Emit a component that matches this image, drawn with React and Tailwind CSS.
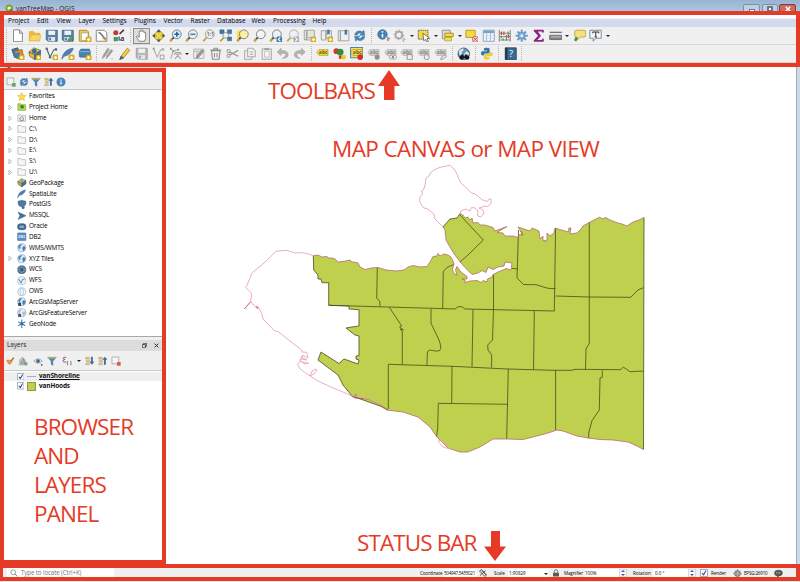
import React from "react";

const Svg = ({ children, className = "size-[14px]" }) => (
  <svg viewBox="0 0 16 16" className={className + " shrink-0"} fill="none" strokeLinejoin="round">
    {children}
  </svg>
);

const Plus = ({ x = 9.5, y = 9.5 }) => (
  <g>
    <rect x={x} y={y} width="6" height="6" rx="1" fill="#e8c02c" stroke="#b18b12" strokeWidth=".7" />
    <path d={`M${x + 3} ${y + 1.3}v3.4M${x + 1.3} ${y + 3}h3.4`} stroke="#fffbe0" strokeWidth="1.4" />
  </g>
);

const Lens = ({ tint = "#eef1f2", handle = "#4a4a3a", ring = "#777e80", children }) => (
  <g>
    <path d="M6 9.5 1.5 14.5" stroke={handle} strokeWidth="2.2" />
    <path d="M4 11.8 1.5 14.5" stroke="#d8a92c" strokeWidth="2" />
    <circle cx="9.3" cy="6.3" r="5.2" fill={tint} stroke={ring} strokeWidth="1.1" />
    {children}
  </g>
);

const Floppy = ({ c = "#5584ad", d = "#3c6489" }) => (
  <g>
    <path d="M1.5 1.5h13v13h-11l-2-2z" fill={c} stroke={d} />
    <rect x="4" y="2" width="8" height="5" fill="#edf1f4" />
    <rect x="4" y="9.5" width="8" height="5" fill="#dfe5ea" />
    <path d="M6 10.5v3" stroke={d} strokeWidth="1.8" />
  </g>
);

const Tag = ({ c = "#d2d2d2", t = "#858585", children }) => (
  <g>
    <path d="M.8 6.5 3.5 3h10.8v7H3.5z" fill={c} stroke={t} strokeWidth=".4" />
    <text x="3.4" y="8.7" fontSize="6" fontWeight="700" fill={t} fontFamily="Open Sans, sans-serif">abc</text>
    {children}
  </g>
);

const Globe = ({ bg = "#e1ebf3", land = "#4b7fae", ring = "#6b94b9" }) => (
  <g>
    <circle cx="8" cy="8" r="6.8" fill={bg} stroke={ring} />
    <path d="M2 6c1-3 4-4.500 6-4l-1 3-2 1 1 2-2 3zM8.500 8l3-3 2.800 2-1 4-3 3-.8-3z" fill={land} />
  </g>
);

const icons = {
  file: <path d="M3 1h7l3.500 3.500V15H3zM10 1v4h3.500" fill="#fff" stroke="#777" />,
  folder: <g><path d="M1.500 3h5l1.500 2h6v9h-12.500z" fill="#e8bd3b" stroke="#d3a52b" strokeWidth=".6" /><path d="M1.500 14 4 7h11.500L13.500 14z" fill="#f8d766" stroke="#ddb03a" strokeWidth=".6" /></g>,
  save: <Floppy />,
  saveAs: <g><Floppy /><path d="M8 14.500l1-3 4-3.500 2.200 2-4 4z" fill="#58a55c" stroke="#2f7340" strokeWidth=".7" /></g>,
  layoutNew: <g><path d="M1.500 1.500h9l2 2v11h-11z" fill="#f2ce4b" stroke="#a3831f" /><path d="M4 4.500h8v9H4z" fill="#fff" stroke="#8d8d74" strokeWidth=".7" /><Plus /></g>,
  layoutMgr: <g><path d="M1.500 1.500h9.500l3 3v10H1.500z" fill="#fff" stroke="#777" /><path d="M4 4.500c2 0 3 0 3.500 2L13 12.500" stroke="#6a7580" strokeWidth="1.800" /><path d="M9 10 13 13.500" stroke="#dba42d" strokeWidth="1.800" /></g>,
  style: <g><circle cx="4.500" cy="4.500" r="3" fill="#c43930" /><path d="m9 6 5-5" stroke="#333" strokeWidth="1.800" /><rect x="2" y="9.500" width="5" height="5" fill="#4f9455" /><path d="M8.500 9v4h2" stroke="#3e7aac" strokeWidth="1.800" /><text x="10" y="14.500" fontSize="7.500" fill="#333" fontWeight="700" fontFamily="Open Sans, sans-serif">a</text></g>,
  hand: <path d="M5 14.500 1.800 9.500c-.6-1.300.8-1.900 1.600-.9L5 10V3c0-1.200 1.700-1.200 1.800 0V1.900c.1-1.300 1.900-1.300 2 0V3c.2-1.100 1.900-1 1.900.2V4.500c.3-1 1.900-1 1.900.3V11l-1.300 3.500z" fill="#fff" stroke="#555" strokeWidth=".8" />,
  pan: <g><path d="m8 .5 2.500 3.200H5.500zM8 15.500l2.500-3.200H5.500zM.5 8l3.200-2.500v5zM15.500 8l-3.200-2.500v5z" fill="#43617e" stroke="#2f4a66" strokeWidth=".6" /><path d="M4.500 4 6.500 3.500 8 5.500l1.500-2 2.500.5.500 2.500-2 1.500 2 1.500-.5 2.500-2.500.5-1.500-2-1.500 2-2.500-.5-.5-2.500 2-1.500-2-1.500z" fill="#f6d52c" stroke="#b49516" strokeWidth=".6" /></g>,
  zin: <Lens tint="#e5eff7" ring="#5480a8"><path d="M9.300 3.300v6M6.300 6.300h6" stroke="#2c6394" strokeWidth="1.900" /></Lens>,
  zout: <Lens><path d="M6.300 6.300h6" stroke="#4a80af" strokeWidth="1.900" /></Lens>,
  zone: <Lens handle="#aaa" ring="#999"><text x="5.700" y="8.700" fontSize="6" fontWeight="700" fill="#777" fontFamily="Open Sans, sans-serif">1:1</text></Lens>,
  zfull: <g><path d="M1 1h5v4.500H1zM10 1h5v4.500h-5zM10 9.500h5V14h-5z" fill="#4178a8" stroke="#2d5c86" strokeWidth=".5" /><circle cx="8" cy="7.500" r="3.400" fill="#eef2f5" stroke="#7a8790" /><path d="M5.500 10.500 1.500 14.500" stroke="#c19633" strokeWidth="2" /></g>,
  zsel: <g><path d="M1 2h8v9H1z" fill="#f6e04b" /><Lens tint="#faf0a0" /></g>,
  zlayer: <Lens tint="#f4f4f2" />,
  zlast: <g><Lens /><rect x="9" y="9" width="6.500" height="6.500" rx="1" fill="#3f7cb3" /><path d="m13.500 10-2.500 2.300 2.500 2.200" stroke="#fff" strokeWidth="1.300" /></g>,
  znext: <g><Lens handle="#aaa" ring="#aaa" /><rect x="9" y="9" width="6.500" height="6.500" rx="1" fill="#aaa" /><path d="m11 10 2.500 2.300-2.500 2.200" stroke="#fff" strokeWidth="1.300" /></g>,
  mapview: <g><path d="M1.500 1.500h3v11h-3zM4.500 1.500h9v9h-9z" fill="#e5e5df" stroke="#999" /><path d="M2 13h7" stroke="#999" /><Plus /></g>,
  bmNew: <g><path d="M1.500 2h5.500v11H1.500zM7 2h6.500v9H7z" fill="#eee" stroke="#999" /><path d="M8.500 1h3v6l-1.500-1.500L8.500 7z" fill="#3f79ad" /><Plus /></g>,
  bm: <g><path d="M1.500 2h2.500v12H1.500zM4 2h10v12H4z" fill="#f0f0f0" stroke="#999" /><path d="M9 1h3v6.500L10.500 6 9 7.500z" fill="#3f79ad" /></g>,
  refresh: <g><path d="M2 7C2.500 3.500 6 1.800 9 2.500l2 1 1.800-2 1.200 6H8l2-2C8 4 5.500 5 5 7z" fill="#4787bd" stroke="#2d669a" strokeWidth=".6" /><path d="M14 9c-.5 3.500-4 5.200-7 4.500l-2-1-1.800 2L2 8.500h6l-2 2c2 1.500 4.500.5 5-1.500z" fill="#4787bd" stroke="#2d669a" strokeWidth=".6" /></g>,
  identify: <g><circle cx="6.500" cy="6.500" r="5.500" fill="#4382b8" stroke="#2e6799" /><path d="M6.500 2.500v2M6.500 6v4" stroke="#fff" strokeWidth="1.800" /><path d="m8.500 7.500 6.500 4-3 .5 1.500 2.500" fill="#fff" stroke="#555" /></g>,
  action: <g><circle cx="7" cy="7" r="4" stroke="#a2a2a2" strokeWidth="2" /><circle cx="7" cy="7" r="5.600" stroke="#b5b5b5" strokeWidth="1.400" strokeDasharray="2 2.200" /><path d="m9 8.500 5.500 4-3 .5 1.500 2.500" fill="#fff" stroke="#999" /></g>,
  select: <g><rect x="1.500" y="1.500" width="11.500" height="10.500" fill="#f8db38" stroke="#4d6170" strokeDasharray="2 .6" /><path d="m7 5 8 6-3.200.6L13.500 15l-1.800.7-1.500-3.200L8 14z" fill="#fff" stroke="#555" strokeWidth=".9" /></g>,
  selval: <g><path d="M1.500 1.500h9.500v10H1.500z" fill="#ddd" stroke="#888" /><path d="M4.500 5h10v4h-10z" fill="#f8df42" stroke="#9a8622" /><path d="M4.500 10h8v4h-8z" fill="#f8df42" stroke="#a08d30" strokeWidth=".7" /></g>,
  desel: <g><rect x="1" y="1.500" width="11" height="8.500" fill="#f9d93b" stroke="#ab9025" /><rect x="9" y="9" width="6.500" height="6.500" rx="2" fill="#f6d9d5" stroke="#c55249" /><path d="m10.500 10.500 3.500 3.500m0-3.500-3.500 3.500" stroke="#c03930" /></g>,
  table: <g><path d="M1.500 1.500h13v13h-13z" fill="#fff" stroke="#6795bd" /><path d="M2 2h12v3H2z" fill="#76a4cb" /><path d="M5.500 5v9M10 2v12" stroke="#89aac7" /><path d="M2 8h12M2 11h12" stroke="#bfd2e2" /></g>,
  calc: <g><path d="M1.500 1v14M14.500 1v14M1.500 5h13M1.500 9h13M1.500 13h13" stroke="#777" /><path d="M4 3v4M7 3v4M10 7v4M12.500 7v4" stroke="#c84b45" strokeWidth="1.500" /><path d="M4 8v3M12 3v4M6 11v3M10 11v3" stroke="#43a062" strokeWidth="1.500" /></g>,
  gear: <g><path d="M8 .8v14.400M.8 8h14.400M3 3l10 10M13 3 3 13" stroke="#6b9dcb" strokeWidth="2.500" /><circle cx="8" cy="8" r="4" fill="#8ab3d8" stroke="#5d8db9" /><circle cx="8" cy="8" r="1.500" fill="#edf4fa" /></g>,
  sigma: <path d="M13 4V2H3l5.500 6L3 14h10v-2.500M5 2.500 9.500 8 5 13" stroke="#8a2385" strokeWidth="2" />,
  measure: <g><path d="M.8 4h14.400" stroke="#777" strokeWidth="1.600" /><rect x=".8" y="7.500" width="14.400" height="5" fill="#858585" stroke="#666" /><path d="M2 9.300h12" stroke="#d5d5d5" /></g>,
  tip: <g><path d="M4 1.500h9q2 0 2 2v4q0 2-2 2H9l-4 3.500V9.500H4q-2 0-2-2v-4q0-2 2-2z" fill="#f5e27c" stroke="#b99e35" /><path d="M4.500 10 2.500 14" stroke="#488c52" strokeWidth="3" /></g>,
  textA: <g><path d="M1 1.500h13.500V11H8l-3 3.500V11H1z" fill="#f2f5f8" stroke="#6d7d8a" /><path d="M4.500 5V3.500h7V5M8 3.500v6M6.500 9.500h3" stroke="#333" strokeWidth="1.200" /></g>,
  ds: <g><path d="M1 3 8 1l3 9-7 2z" fill="#3d79aa" stroke="#28557c" /><path d="m4 5 9-2 2 9-8 2z" fill="#e08d36" stroke="#9c6129" /><path d="m3 8 7-2 1 7H4z" fill="#427dae" /><Plus /></g>,
  gpkg: <g><path d="m1 6 6-5 8 3-7 5z" fill="#f5c840" stroke="#3a4650" strokeWidth=".7" /><path d="m1 6 7 3v6L2 11z" fill="#dba827" stroke="#3a4650" strokeWidth=".7" /><path d="m8 9 7-5v6l-7 5z" fill="#3e719b" stroke="#2c4f6e" strokeWidth=".7" /><circle cx="8" cy="5" r="2.500" fill="#69a3cc" /></g>,
  gpkgNew: <g><path d="m1 6 6-5 8 3-7 5z" fill="#f5c840" stroke="#3a4650" strokeWidth=".7" /><path d="m1 6 7 3v6L2 11z" fill="#f0bb30" stroke="#3a4650" strokeWidth=".7" /><path d="m8 9 7-5v6l-7 5z" fill="#3e719b" stroke="#2c4f6e" strokeWidth=".7" /><circle cx="7.500" cy="5" r="2.800" fill="#376e9a" /><Plus /></g>,
  shp: <g><path d="m2 2 4 10L10 4q1.500-2 4-1.500" stroke="#4d5d66" strokeWidth="1.300" /><circle cx="2" cy="2" r="1.500" fill="#4f6b7c" /><circle cx="6" cy="12" r="1.500" fill="#4f6b7c" /><circle cx="13" cy="3" r="1.500" fill="#4f6b7c" /><Plus /></g>,
  featherNew: <g><path d="M1 14.500C2 7 7 2 14.500 1.500 13 7 9 10 3.500 11z" fill="#4e82b0" stroke="#315f88" strokeWidth=".7" /><Plus /></g>,
  feather: <path d="M1 15C2 7 7 2 14.500 1.500 13 7 9 10 3.500 11z" fill="#4e82b0" stroke="#315f88" strokeWidth=".6" />,
  virt: <g><path d="m1.500 5 2-2.500h10l1 2.500v6l-1 1h-11l-1-1z" fill="#4782b5" stroke="#33648e" strokeWidth=".7" /><path d="M2 5.500h12" stroke="#97bddb" /><Plus /></g>,
  pencils: <path d="m1.500 14 1-4L8 1.500l2 1.300-5.500 8.500zM6 14l1-4 5-7 2 1.300-5.200 7zM12 14h2" fill="#999" stroke="#aaa" />,
  pencil: <g><path d="M3.500 11 11 1.500l3 2.300L6.500 13z" fill="#f0cb43" stroke="#a8882a" /><path d="M3.500 11 2 15l4.500-2z" fill="#666" stroke="#555" /></g>,
  saveG: <Floppy c="#b7b7b7" d="#9a9a9a" />,
  addG: <g><path d="m2 2 4 10L10 4q1.500-2 4-1.500" stroke="#aaa" strokeWidth="1.300" /><circle cx="2" cy="2" r="1.500" fill="#aaa" /><circle cx="13" cy="3" r="1.500" fill="#aaa" /><rect x="9" y="9" width="6" height="6" rx="1" fill="#b5b5b5" /><path d="M12 10.500v3M10.500 12h3" stroke="#fff" strokeWidth="1.200" /></g>,
  vertex: <g><path d="M2 2 5 5l6-2M5 5l-3 9" stroke="#aaa" strokeWidth="1.200" /><path d="m7 6 7 8m0-8-7 8M6 9q5-5 9 0" stroke="#aaa" strokeWidth="1.500" /><path d="M1 1h2v2H1zM10 2h2v2h-2zM4 4h2v2H4z" fill="#8f8f8f" /></g>,
  modify: <g><path d="M2 2.500h12v11H2z" fill="#eee" stroke="#aaa" /><path d="M2 5h12M6 5v8" stroke="#aaa" /><path d="m5 13 1-3 6-7 2 2-6 7z" fill="#999" stroke="#8b8b8b" /></g>,
  trash: <path d="M3 4.500h10l-1 10H4zM1.500 3.500h13M6 3V1.500h4V3M6.500 7v5M9.500 7v5" stroke="#8c8c8c" strokeWidth="1.300" />,
  cut: <g><path d="m14.500 4-10 5.500M14.500 11 4.500 6" stroke="#999" strokeWidth="1.500" /><circle cx="3" cy="5" r="1.900" stroke="#999" strokeWidth="1.200" /><circle cx="3" cy="10.500" r="1.900" stroke="#999" strokeWidth="1.200" /></g>,
  copy: <path d="M5.500 1.500h6l3 3v7h-9zM5 4.500H2v10h8.500V12M8 6h4M8 8.500h4" stroke="#aaa" strokeWidth="1.200" />,
  paste: <g><path d="M2.500 2.500h11v12h-11z" stroke="#aaa" strokeWidth="1.200" /><path d="M5.500 5h5.500v7H5.500z" fill="#f8f8f8" stroke="#b5b5b5" /><path d="M5 1.500h6v2H5z" fill="#999" /></g>,
  undo: <path d="M6 1.500 1.500 6 6 10V7.500q5-.5 5.500 1.500.4 2.500-4 4.500 7.500-.5 7-5Q14 4 6 4z" fill="#b2b2b2" stroke="#999" strokeWidth=".6" />,
  redo: <path d="M10 1.500 14.500 6 10 10V7.500Q5 7 4.500 9q-.4 2.500 4 4.500-7.500-.5-7-5Q2 4 10 4z" fill="#b2b2b2" stroke="#999" strokeWidth=".6" />,
  abc: <Tag c="#f5d93a" t="#6d5a15" />,
  diag: <g><circle cx="4" cy="5" r="3.400" fill="#d8372e" /><circle cx="8.500" cy="6" r="4" fill="#28923c" /><path d="M7 10h3.500v4H7z" fill="#d8372e" /><circle cx="12.500" cy="12" r="2.800" fill="#f0c62d" /></g>,
  abcHi: <g><rect x=".7" y=".7" width="14.600" height="12" fill="#f7df4c" stroke="#4984b8" strokeWidth="1.200" /><Tag c="#f8df54" t="#5d5325"><circle cx="12" cy="12" r="3.300" fill="#d22f27" /></Tag></g>,
  abc1: <Tag><circle cx="12" cy="12" r="3" fill="#8f8f8f" /></Tag>,
  abc2: <Tag><ellipse cx="10.500" cy="12" rx="4.500" ry="2.500" fill="#eee" stroke="#999" /><circle cx="10.500" cy="12" r="1.300" fill="#777" /></Tag>,
  abc3: <Tag><rect x="8.500" y="9" width="6" height="6" fill="#eee" stroke="#888" /></Tag>,
  abc4: <Tag><circle cx="11.500" cy="12" r="3" fill="#eee" stroke="#888" /></Tag>,
  abc5: <Tag><path d="m8 15 1-3 4-3 2 2-4 3z" fill="#eee" stroke="#888" /></Tag>,
  metasearch: <g><Globe bg="#6b93b8" land="#dce8f1" ring="#2e4e6b" /><circle cx="5.500" cy="12.500" r="2.700" fill="#181818" /><circle cx="12" cy="12.500" r="2.700" fill="#181818" /><path d="M5 9h2.500v2h2V9H12v4H5z" fill="#181818" /></g>,
  python: <g><path d="M4.500 4V2.500Q4.500 1 8 1t3.500 1.500V6Q11.500 7.800 9 7.800H6Q4.500 8 4.500 10H3Q1 10 1 7.500T3 5h5V4z" fill="#3a73a4" /><path d="M11.500 12v1.500Q11.500 15 8 15t-3.500-1.500V10Q4.500 8.200 7 8.200h3Q11.500 8 11.500 6H13q2 0 2 2.500T13 11H8v1z" fill="#f2cc3e" /></g>,
  help: <g><path d="M1.500 1h13v14h-13z" fill="#396b96" stroke="#233f57" /><path d="M1.500 1H4v14H1.500z" fill="#263544" /><text x="6" y="12" fontSize="11" fill="#fff" fontFamily="Open Sans, sans-serif">?</text></g>,
  star: <path d="m8 .8 2.200 4.700 5 .6-3.700 3.500 1 5L8 12l-4.500 2.600 1-5L.8 6.100l5-.6z" fill="#fae04d" stroke="#d3ae35" strokeWidth=".8" />,
  projHome: <g><path d="M1.500 3h5l1 1.500h7V14h-13z" fill="#b9d94c" stroke="#6a9a2d" /><path d="M6 5.500h5l1 4-4 2-3-3z" fill="#2e8b32" /></g>,
  home: <g><path d="M1.500 3h5l1 1.500h7V14h-13z" fill="#f4f4f4" stroke="#999" /><path d="m4 9.500 4-3.500 4 3.500M5.500 9v3.500h5V9" stroke="#555" /></g>,
  dir: <path d="M1.500 2.500h5l1.500 2h6.500v9.500h-13z" fill="#f6f6f6" stroke="#a2a2a2" />,
  pg: <path d="M2 2q6-2 12.500 0l.5 5-3 3v4l-3 1-1-4-4-1Q1 6 2 2z" fill="#4b7ba6" stroke="#315c83" />,
  mssql: <path d="m2 2 13 6-13 6 3-6z" fill="#41729d" stroke="#365e82" />,
  oracle: <g><rect x="1" y="3" width="14" height="10" rx="4.500" fill="#3d6c97" stroke="#29506f" /><rect x="4" y="6" width="8" height="4" rx="1.500" fill="#86a9c7" /></g>,
  db2: <g><rect x="1" y="1.500" width="14" height="13" rx="1" fill="#5b8dc0" stroke="#477aac" /><text x="2" y="10.500" fontSize="6" fontWeight="700" fill="#e0edf8" fontFamily="Open Sans, sans-serif">DB2</text></g>,
  globe: <Globe />,
  wcs: <g><circle cx="8" cy="8" r="6.800" fill="#4c7499" stroke="#355a7b" /><path d="M2 8h12M8 2v12M4 4l8 8M12 4l-8 8" stroke="#a8c4db" /><rect x="5.500" y="5.500" width="5" height="5" fill="#35546f" /></g>,
  wfs: <g><circle cx="8" cy="8" r="6.800" fill="#e9f1f7" stroke="#8fb1ce" /><path d="m3 5 4 7 2-6 4-1" stroke="#4d81ac" strokeWidth="1.500" /></g>,
  ows: <g><circle cx="8" cy="8" r="6.800" fill="#eef5fa" stroke="#8fb4d2" /><ellipse cx="8" cy="8" rx="3" ry="6.500" stroke="#8fb4d2" /></g>,
  arcM: <g><Globe /><path d="M2 10h5v5H2z" fill="#2f4658" /></g>,
  arcF: <g><Globe bg="#f2f6f9" land="#a8c1d6" /><path d="M2 10h5v5H2z" fill="#44596a" /></g>,
  geonode: <g><path d="M8 1v14M2 4.500l12 7M14 4.500l-12 7" stroke="#4f82ae" strokeWidth="2" /><circle cx="8" cy="8" r="2.500" fill="#3a6e9b" /></g>,
  addLayer: <g><path d="M1.500 1.500h11v11h-11z" fill="#f3f3f3" stroke="#8d8d8d" /><rect x="9.500" y="9.500" width="6" height="6" rx="1" fill="#62a866" /></g>,
  funnel: <g><path d="M1 2h14l-5.500 6.500V15l-3-2V8.500z" fill="#4c87b9" stroke="#3a709f" strokeWidth=".6" /><path d="M1 2h14l-1.500 2h-11z" fill="#d5b44f" /></g>,
  collapse: <g><path d="M1 2h6v3H1zM2 7h5v3H2zM1 12h6v2H1z" fill="#e2bb57" stroke="#a0a0a0" strokeWidth=".6" /><path d="m11 1 4 5h-2.500v8h-3V6H7z" fill="#3c6f9d" /></g>,
  expand: <g><path d="M1 2h6v3H1zM2 7h5v3H2zM1 12h6v2H1z" fill="#e2bb57" stroke="#a0a0a0" strokeWidth=".6" /><path d="m11 14 4-5h-2.500V1h-3v8H7z" fill="#3c6f9d" /></g>,
  info: <g><circle cx="8" cy="8" r="6.500" fill="#4886bb" stroke="#356f9f" /><path d="M8 4v2M8 7v5" stroke="#fff" strokeWidth="2" /></g>,
  brush: <g><path d="m7 9 6-7 2 1.500L9 11z" fill="#c95b2c" /><path d="M1.500 7q2 1.500 3.500 0l5 4-3 4q-4-1-5.500-8z" fill="#eba13b" stroke="#c66f27" /></g>,
  group: <g><path d="M3 12V6l4-4 4 4v6zM1 14h9" fill="#ddd" stroke="#888" strokeWidth="1.200" /><path d="m5 10 3-6 3 6z" fill="#a9b8bd" stroke="#778" /><rect x="10" y="10" width="5" height="5" fill="#71a66f" /></g>,
  eye: <g><path d="M1 8q7-7 14 0-7 7-14 0z" fill="#dce6ed" stroke="#8a9298" /><circle cx="8" cy="8" r="3" fill="#416c91" /><path d="M12 13.500h4l-2 2.500z" fill="#222" /></g>,
  epsilon: <g><path d="M7 2.500Q2 .5 2 3.500 2 5.500 5 5.500 1.500 5.500 1.500 8q0 3 5.500 1.500" stroke="#8a3f92" strokeWidth="1.300" /><path d="M10 9H8.500v5H10M13 9h1.500v5H13" stroke="#666" strokeWidth="1.200" /></g>,
  remove: <g><path d="M1.500 1.500h11v11h-11z" fill="#f5f5f5" stroke="#8d8d8d" /><rect x="9.500" y="9.500" width="6" height="6" rx="1" fill="#db5b54" /></g>,
  lens: <g><circle cx="6.500" cy="6.500" r="4.800" stroke="#777" strokeWidth="1.400" /><path d="m10 10 5 5" stroke="#777" strokeWidth="1.800" /></g>,
  lock: <g><path d="M4.500 8V5q0-3.500 3.500-3.500T11.500 5v3" stroke="#777" strokeWidth="2" /><rect x="2" y="7.500" width="12" height="7.500" rx="1" fill="#5a5a5a" /></g>,
  track: <path d="m1 4 4-3 10 11-3 3zM2 13 13 3M6 3l7 8" stroke="#444" strokeWidth="1.800" />,
  crs: <g><path d="M8 0v16M0 8h16" stroke="#666" /><circle cx="8" cy="8" r="5.500" fill="#8d9295" stroke="#666" /><path d="M3 8h10M8 3v10" stroke="#c9cccd" strokeWidth=".8" /></g>,
  bubble: <g><path d="M1 7q0-5 7-5t7 5-6 5l-3 3v-3Q1 12 1 7z" fill="#555" stroke="#3d3d3d" /><path d="M4 7h8" stroke="#ddd" strokeWidth="1.600" strokeDasharray="1.800 1" /></g>,
};

const Icon = ({ name, className }) => <Svg className={className}>{icons[name]}</Svg>;

const rowOne = "file folder save saveAs layoutNew layoutMgr style | hand pan zin zout zone zfull zsel zlayer zlast znext mapview bmNew bm refresh | identify action v select v selval v desel table calc gear sigma measure v tip textA v".split(" ");
const rowTwo = "ds gpkgNew shp featherNew virt | pencils pencil saveG addG vertex v modify trash cut copy paste undo redo | abc diag abcHi abc1 abc2 abc3 abc4 abc5 | metasearch | python | help |".split(" ");

const Grip = () => (
  <div className="flex w-[6.4px] shrink-0 items-center justify-center">
    <div className="h-[15px] border-l border-dotted border-[#b5b5b5]" />
  </div>
);
const Caret = () => <div className="mt-px size-0 border-x-[2px] border-t-[2.500px] border-x-transparent border-t-[#222]" />;

const Toolbar = ({ items }) => (
  <div className="flex h-[18px] shrink-0 items-center border-b border-[#d8d8d8] bg-[#f0f0f0] pl-[3px]">
    <Grip />
    {items.map((n, i) =>
      n === "|" ? <Grip key={i} /> : n === "v" ? (
        <div key={i} className="flex w-[7px] shrink-0 justify-center"><Caret /></div>
      ) : (
        <div key={i} className={n === "hand" ? "flex h-[16px] w-[16.8px] shrink-0 items-center justify-center border border-[#8d8d8d] bg-[#dedede]" : "flex w-[16.8px] shrink-0 justify-center"}>
          <Icon name={n} className="size-[13.500px]" />
        </div>
      ),
    )}
  </div>
);

const menus = [
  ["Project", "w-[29px]"], ["Edit", "w-[19.5px]"], ["View", "w-[22px]"], ["Layer", "w-[24px]"],
  ["Settings", "w-[31.5px]"], ["Plugins", "w-[29.5px]"], ["Vector", "w-[27px]"], ["Raster", "w-[26.5px]"],
  ["Database", "w-[34.5px]"], ["Web", "w-[21.5px]"], ["Processing", "w-[39.5px]"], ["Help", "w-[20px]"],
];

const tree = [
  ["star", "Favorites"], ["projHome", "Project Home", 1], ["home", "Home", 1], ["dir", "C:\\", 1], ["dir", "D:\\", 1],
  ["dir", "E:\\", 1], ["dir", "S:\\", 1], ["dir", "U:\\", 1], ["gpkg", "GeoPackage"], ["feather", "SpatiaLite"],
  ["pg", "PostGIS"], ["mssql", "MSSQL"], ["oracle", "Oracle"], ["db2", "DB2"], ["globe", "WMS/WMTS"],
  ["globe", "XYZ Tiles", 1], ["wcs", "WCS"], ["wfs", "WFS"], ["ows", "OWS"], ["arcM", "ArcGisMapServer"],
  ["arcF", "ArcGisFeatureServer"], ["geonode", "GeoNode"],
];

const Check = ({ className = "size-[7.500px]" }) => (
  <Svg className={className}>
    <rect x="1" y="1" width="14" height="14" fill="#fff" stroke="#8a99a8" strokeWidth="1.500" />
    <path d="m4 8 3 4 5-9" stroke="#31538c" strokeWidth="2.200" />
  </Svg>
);

const Panel = () => (
  <aside className="flex w-[166px] shrink-0 flex-col bg-[#f0f0f0] pl-1">
    <div className="relative h-[5px] shrink-0 bg-[#dcdcdc] pl-[3px] text-[6.400px] leading-[6px] text-[#222]">Browser</div>
    <div className="flex h-[18px] shrink-0 items-center gap-[2.500px] border-b border-[#c9c9c9] pl-[2px] pt-[3px]">
      {["addLayer", "refresh", "funnel", "collapse", "info"].map((n) => <Icon key={n} name={n} className="size-[10px]" />)}
    </div>
    <div className="flex h-[247px] shrink-0 flex-col border-b border-[#a8a8a8] bg-white pt-[1px]">
      {tree.map(([ic, t, open], i) => (
        <div key={i} className="flex h-[10.840px] shrink-0 items-center pl-[4px] text-[6.400px] tracking-[-0.160px] text-black">
          <span className="flex w-[9px] shrink-0">
            {open && <Svg className="size-[5px]"><path d="m3 1 9 7-9 7z" fill="#fff" stroke="#999" strokeWidth="2" /></Svg>}
          </span>
          <Icon name={ic} className="size-[9.500px]" />
          <span className="pl-[2.500px] leading-none whitespace-nowrap">{t}</span>
        </div>
      ))}
    </div>
    <div className="mt-[3px] flex h-[11px] shrink-0 items-center bg-[#dcdcdc] pl-[3px] pr-[7px] text-[6.400px] text-[#222]">
      <span className="flex-1 leading-none">Layers</span>
      <Svg className="mr-[7px] size-[5px]"><path d="M5 5V1h10v9h-4M1 5h10v10H1z" stroke="#222" strokeWidth="2.200" /></Svg>
      <Svg className="size-[5px]"><path d="m2 2 12 12M14 2 2 14" stroke="#222" strokeWidth="3" /></Svg>
    </div>
    <div className="flex h-[20px] shrink-0 items-center border-b border-[#c9c9c9] pl-[2px]">
      <Icon name="brush" className="mr-[3px] size-[9px]" />
      <Icon name="group" className="mr-[5px] size-[10px]" />
      <Icon name="eye" className="mr-[4px] size-[10px]" />
      <Icon name="funnel" className="mr-[5px] size-[10px]" />
      <Icon name="epsilon" className="mr-[5px] size-[10px]" />
      <Caret />
      <Icon name="expand" className="ml-[4px] mr-[3px] size-[10px]" />
      <Icon name="collapse" className="mr-[3px] size-[10px]" />
      <Icon name="remove" className="size-[10px]" />
    </div>
    <div className="flex-1 bg-white pt-[1px] text-[6.400px] font-bold text-[#111]">
      <div className="flex h-[9px] items-center bg-[#efefef] pl-[12.500px] leading-none">
        <Check />
        <span className="mx-[3px] w-[9px] border-t border-[#c79ace]" />
        <span className="tracking-[-0.100px] underline">vanShoreline</span>
      </div>
      <div className="flex h-[10px] items-center pl-[12.500px] leading-none">
        <Check />
        <span className="mx-[3px] size-[9px] border border-[#8d9c38] bg-[#bfd04e]" />
        <span className="tracking-[-0.100px]">vanHoods</span>
      </div>
    </div>
  </aside>
);

const north = "M313.300 255.700 318 255 322 257 327 256.500 328 258 332 258 335 259 338 262 343 261.500 350 260 352 262 354 262 358 263 360 267 365 269.500 371 268 378 267.500 386 270 396 271 404 270 408 267 413 265.500 420 267 427 266.500 430 262 433 256.500 437 256 438 253.500 440 256 444 254 448 255 451 257 453 261 454 264 452.500 269 453.500 273 457 275.500 455.500 270 457 266.500 460 271 463 273.500 467 276.500 467 279 462 279 465 280 465 282.500 470 281 477 280.500 481 282.500 483 280.500 487 282 487.500 279 492 277 493 274.500 498 272 503 270 506 268.500 511 270 512 263 505 262 504 266 498 267 493 269.500 488 267 486 272.500 482 270.500 478 273 472 274.500 467 269.500 460.500 262.500 453.500 253 446 240 445 230 443 227";
const harbour = "M460 213.500 463 215 465 218 468 217 470 220 472 218 473 223 478 222.500 480 225 485 225 493 227.500 495 231 507 226.500 497 232.500 503 233 505 236 513 236 518 237.500 520 234 522 236 521 231 523 235 518 227 530 231 532 228 539 231 540 239 543 236 543 241 545 240 545 242 547 240 547 233 550 236 554 233 555 228 568 232 569 228 571 228 570 234 577 233 581 229 583 226 590 222 594 220 600 217 602 219 606 217.500 610 220 618 223 622 224 627 226 633 222 639 220 644 217.500";
const south = "M643.500 449.500 637 446 628 442 613 440 600 439.500 588 438 577 436 563 431 557 430 548 433 537 436 523 439.500 507 439 493 439 480 447 468 452 460 452 448 448 437 437 430 427 418 417 403 412 387 410 380 406";
const west = "L352 396 343 385 338 375 318 360 321 352 339 363.500 344 359 358 364 359 360 356 359 356 356 359 355.500 359 336 355 335 346 328 352 327 359 326 359 309.700 349 309 349 306 328.700 305.300 328.700 282.700 322 282.700 321 279 318 279 318 275 313.700 270z";
const land = north + "L450 219 457 218 " + harbour.replace("M", "L") + south.replace("M", "L") + west;

const bounds = [
  "M380 406 " + west.replace("z", "") + "L313.300 255.700",
  "M443 227 450 219 457 218 460 213.500M644 217.500 643.500 449.500",
  "M377.300 267.700 376.700 298.300 379.700 301 380 306.500",
  "M328.700 305.300 445 308.700 455 309Q460 304 465 309L554.300 311",
  "M554.300 311 555.600 228",
  "M555.600 296 589 297 630.700 297.300 638 290 643.500 287.700",
  "M589.300 222 589.300 343.300 586 349 585.500 369.500",
  "M534.300 311 533.500 369.500M473 309.500 472 366.500",
  "M493.500 275V310L492.500 340 487.700 345 488 350 491.700 355 491.500 367.500",
  "M442.700 308.500 443.300 271.500 446.700 267.700 453.500 264.500",
  "M460 215 483.300 240 468 255 460 262",
  "M518.500 230 517 278 523.500 284.500 536 284.700 548 288.300 555.600 288.700M512 268.300 518 269",
  "M389.300 307.300 401.700 326 399.500 327 403.500 330 400.500 329 402.300 332V364.500",
  "M431 309V323.300L439 340Q443 351 438 351C434 352 427 347 427.300 354L427 365",
  "M388.300 409V364.300L452 366.300 508 369 553 370.300H572L575 369.300 620.700 369.700 623.300 367 630 371.700 643.500 371",
  "M452 366.300 451.700 403.300M436.500 437 437.700 428 438.300 403.300 507.700 404.300M508.300 369 506.700 438.700",
  "M555.600 370.300V430M602.300 370.300V377.300L600 378 599.300 410 592 420.700 588.700 433V438",
];

const pink = [
  "M443 227 439 223 435 219 434 214 430 211 428 209 424 208 421.500 205 419.500 201 420 197 422.500 194 421.500 191 423.500 190 425 185 426 178 429 176 430.500 172.700 434 170 440 167.300 450 165.300 454 169 456.500 173 460.500 182.700 466.500 188 471.500 193 474 193.500 478 196 481.500 199.500 487.500 201.500 489 199 491 199 491 203 488 206.500 485 206 479 208 483 210 484 213 481 217 477.700 216 478 211 475 208 471.500 207.500 470 211 466 209 461 211 460 213.500",
  "M313.300 255.700 307 253.500 301.700 252.700 295 253 286.700 250.300 275.700 251.300 270 257.300 264 263 251.700 273.300 250 278.300 247 285 245.700 287.700 250 291.700 251.700 294.300 250.700 301.700 244.300 309M250.700 301.700 256.700 308.300 257.700 306 261.700 313.300 263 319 274.300 330.700 278.300 331.700 290 341 301.700 350 302 352 306.700 352.300 308 358 303 355.500 301 357 307 360 301 359 300 361 308 363.500M303 355 300 360 304 364 309 363M300 361 297.700 364 300 369 310 376 312 371 316 369 317 370 314 374 310 376 318 381 331.700 387.300 350 395 368.300 399 380 405",
  "M438.500 440 445 443 450 449 443 447 438 441",
];

const MapView = () => (
  <svg viewBox="166 67 630 497" className="h-full w-full" fill="none" strokeLinejoin="round">
    <path d={land} fill="#bfd04e" />
    {bounds.map((d) => <path key={d} d={d} stroke="#454d1e" strokeWidth=".8" />)}
    {[north, harbour, south].map((d) => <path key={d} d={d} stroke="#b4636a" strokeWidth=".75" />)}
    <path d="M350 395 355 398 356 394M355 398 368 399 380 405 388 410" stroke="#a8434c" strokeWidth=".8" />
    {pink.map((d) => <path key={d} d={d} stroke="#eaa3ba" strokeWidth=".9" />)}
    <path d="M244.300 309 250.700 301.700M256 306 258 309" stroke="#d65779" strokeWidth=".9" />
  </svg>
);

const Spin = () => (
  <Svg className="size-[8px]"><path d="M1 .5h14v15H1z" fill="#f8f8f8" stroke="#bbb" /><path d="m4 6 4-4 4 4zM4 10l4 4 4-4z" fill="#4a5ca0" /></Svg>
);

const StatusBar = () => (
  <footer className="flex h-[18px] shrink-0 items-center bg-[#f0f0f0] pl-[7px] text-[4.500px] leading-none whitespace-nowrap text-black">
    <div className="flex h-[10px] w-[107px] shrink-0 items-center bg-white pl-[3px] text-[6.200px] tracking-[-0.120px] text-[#777]">
      <Icon name="lens" className="mr-[3px] size-[8px]" />
      Type to locate (Ctrl+K)
    </div>
    <span className="ml-[306px] w-[24px] shrink-0 tracking-[-0.100px]">Coordinate</span>
    <span className="flex h-[9px] w-[33px] shrink-0 items-center bg-white tracking-[-0.260px]">504947,5455021</span>
    <Icon name="track" className="ml-[1.500px] mr-[1.500px] size-[8px]" />
    <span className="ml-[6px] w-[14px] shrink-0">Scale</span>
    <span className="flex h-[9px] w-[41px] shrink-0 items-center justify-between bg-white px-[1px]">1:90829<Caret /></span>
    <Icon name="lock" className="ml-[3px] mr-[4px] size-[8px]" />
    <span className="w-[21px] shrink-0 tracking-[-0.100px]">Magnifier</span>
    <span className="flex h-[9px] w-[34px] shrink-0 items-center bg-white">100%</span>
    <Spin />
    <span className="ml-[6px] w-[20px] shrink-0">Rotation</span>
    <span className="flex h-[9px] w-[35px] shrink-0 items-center bg-white pl-[2px]">0.0 °</span>
    <Spin />
    <Check className="ml-[4px] mr-[3px] size-[8px]" />
    <span className="w-[22px] shrink-0">Render</span>
    <Icon name="crs" className="mr-[2px] size-[9px]" />
    <span className="w-[30px] shrink-0 tracking-[-0.150px]">EPSG:26910</span>
    <Icon name="bubble" className="size-[9px]" />
  </footer>
);

export default function App() {
  return (
    <div className="relative flex h-[582px] w-[800px] flex-col overflow-hidden bg-[#c9dbea] font-['Open_Sans','Noto_Sans',sans-serif]">
      <header className="flex h-[15px] shrink-0 items-start bg-linear-to-b from-[#98b4d2] to-[#b4cbe2] pl-[5px] pt-[3px]">
        <Svg className="mt-px size-[9px]"><circle cx="7.500" cy="7.500" r="5" fill="#e9f3d7" stroke="#76a832" strokeWidth="3.500" /><path d="m9 9 6 6" stroke="#4d8a27" strokeWidth="3" /></Svg>
        <span className="pl-[2px] text-[6.500px] leading-[11px] text-[#222]">vanTreeMap - QGIS</span>
        <div className="ml-auto flex gap-[1.500px] pr-[4px] pt-px">
          <div className="flex h-[9px] w-[17px] justify-center rounded-t-[2px] border border-[#7890aa] bg-[#bdd0e3] pt-[4px]"><span className="h-[3px] w-[6px] border border-[#68798a] bg-white" /></div>
          <div className="flex h-[9px] w-[16px] justify-center rounded-t-[2px] border border-[#7890aa] bg-[#bdd0e3] pt-[1px]"><span className="size-[6px] border-2 border-[#68798a] bg-white" /></div>
          <div className="flex h-[9px] w-[17px] justify-center rounded-t-[2px] border border-[#823d38] bg-[#cc6a5c] pt-[1px]"><Svg className="size-[6px]"><path d="m2 2 12 12M14 2 2 14" stroke="#fff" strokeWidth="4" /></Svg></div>
        </div>
      </header>
      <nav className="flex h-[12px] shrink-0 items-center bg-linear-to-b from-white from-20% to-[#d4daed] to-40% pl-[8px] text-[6.500px] leading-none text-black">
        {menus.map(([m, w]) => <span key={m} className={w + " shrink-0"}>{m}</span>)}
      </nav>
      <Toolbar items={rowOne} />
      <Toolbar items={rowTwo} />
      <div className="h-[4px] shrink-0" />
      <main className="flex h-[497px] shrink-0">
        <Panel />
        <div className="w-[630px] shrink-0 bg-white"><MapView /></div>
        <div className="flex-1 border-l border-[#a9adb2]" />
      </main>
      <StatusBar />

      <div className="absolute inset-x-0 top-[11px] h-[56px] border-4 border-[#e53b26]" />
      <div className="absolute left-0 top-[68px] h-[496px] w-[166px] border-4 border-[#e53b26]" />
      <div className="absolute inset-x-0 top-[564px] h-[17px] border-4 border-l-3 border-[#e53b26]" />
      <div className="absolute inset-0 whitespace-nowrap text-[22.500px] leading-[29px] text-[#e53b26]">
        <span className="absolute left-[268px] top-[76px] tracking-[-0.900px]">TOOLBARS</span>
        <span className="absolute left-[332px] top-[134px] tracking-[-0.600px]">MAP CANVAS or MAP VIEW</span>
        <span className="absolute left-[357px] top-[528px] tracking-[-0.900px]">STATUS BAR</span>
        <p className="absolute left-[34px] top-[412px] tracking-[-0.900px]">BROWSER<br />AND<br />LAYERS<br />PANEL</p>
      </div>
      <svg viewBox="0 0 22 30" className="absolute left-[378px] top-[70px] h-[30px] w-[22px]"><path d="M11 0 22 16H16.500V30H6V16H0z" fill="#e53b26" /></svg>
      <svg viewBox="0 0 22 30" className="absolute left-[484px] top-[531px] h-[30px] w-[22px]"><path d="M11 30 22 15.500H16V0H7V15.500H0z" fill="#e53b26" /></svg>
    </div>
  );
}
